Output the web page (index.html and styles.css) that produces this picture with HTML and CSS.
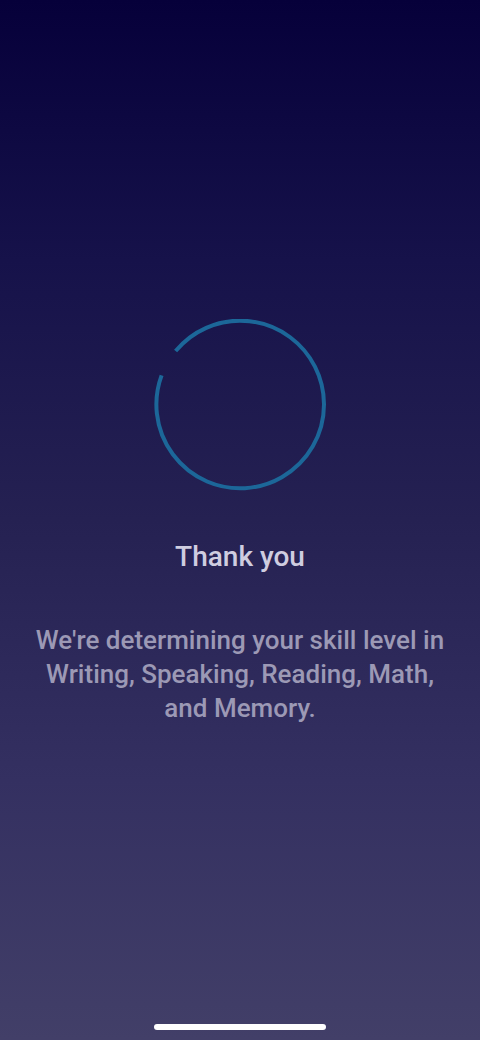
FILE: index.html
```html
<!DOCTYPE html>
<html lang="en">
<head>
  <meta charset="UTF-8" />
  <meta name="viewport" content="width=device-width, initial-scale=1" />
  <title>Thank you</title>
  <link rel="stylesheet" href="styles.css">
</head>
<body>

<main class="loading">
  <svg class="spinner" viewBox="0 0 172 172" aria-hidden="true">
    <path d="M21.6 32.1 A83.8 83.8 0 1 1 7.6 56.4" />
  </svg>
  <h1>Thank you</h1>
  <p>We're determining your skill level in Writing, Speaking, Reading, Math, and&nbsp;Memory.</p>
</main>

<div class="home-indicator"></div>

</body>
</html>
```

FILE: styles.css
```css
* {
  box-sizing: border-box;
}
body {
  font-family: Roboto, sans-serif;
  font-weight: 500;
  margin: 0;
  min-height: 100vh;
  display: flex;
  flex-direction: column;
  background: linear-gradient(#06003a 0%, #16124a 25%, #252152 50%, #343061 75%, #423f68 100%);
  text-align: center;
}
/* Loading message */
.loading {
  flex: 1;
  display: flex;
  flex-direction: column;
  align-items: center;
  justify-content: center;
  gap: 48px;
  padding: 4px 20px 0;
}
.spinner {
  width: 172px;
  height: 172px;
  fill: none;
  stroke: #1c6799;
  stroke-width: 4;
}
h1 {
  margin: 0;
  font-size: 28px;
  font-weight: 500;
  line-height: 36px;
  color: #cfcde0;
}
p {
  margin: 0;
  max-width: 440px;
  font-size: 26px;
  line-height: 34px;
  color: #9c99b5;
}
/* Bar at the bottom of the phone */
.home-indicator {
  position: fixed;
  bottom: 10px;
  left: 50%;
  transform: translateX(-50%);
  width: 172px;
  height: 6px;
  border-radius: 3px;
  background: #fff;
}
```
